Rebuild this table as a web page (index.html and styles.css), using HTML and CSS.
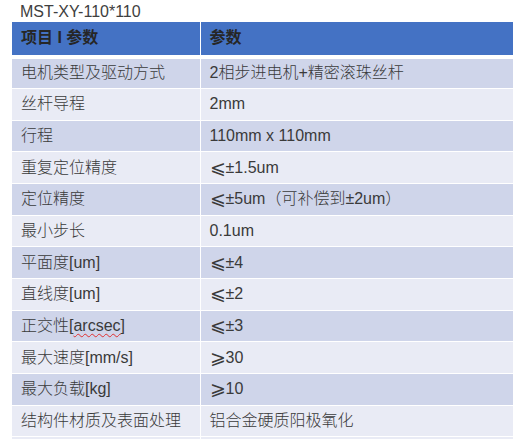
FILE: index.html
```html
<!DOCTYPE html>
<html lang="zh">
<head>
<meta charset="utf-8">
<title>MST-XY-110*110</title>
<link rel="stylesheet" href="styles.css">
</head>
<body>
<div class="title">MST-XY-110*110</div>
<table class="spec">
  <thead>
    <tr><th>项目 I 参数</th><th>参数</th></tr>
  </thead>
  <tbody>
    <tr class="odd"><td>电机类型及驱动方式</td><td>2相步进电机+精密滚珠丝杆</td></tr>
    <tr class="even"><td>丝杆导程</td><td>2mm</td></tr>
    <tr class="odd"><td>行程</td><td>110mm x 110mm</td></tr>
    <tr class="even"><td>重复定位精度</td><td><span class="sym">⩽</span>±1.5um</td></tr>
    <tr class="odd"><td>定位精度</td><td><span class="sym">⩽</span>±5um（可补偿到±2um）</td></tr>
    <tr class="even"><td>最小步长</td><td>0.1um</td></tr>
    <tr class="odd"><td>平面度[um]</td><td><span class="sym">⩽</span>±4</td></tr>
    <tr class="even"><td>直线度[um]</td><td><span class="sym">⩽</span>±2</td></tr>
    <tr class="odd"><td>正交性[<span class="spell">arcsec</span>]</td><td><span class="sym">⩽</span>±3</td></tr>
    <tr class="even"><td>最大速度[mm/s]</td><td><span class="sym">⩾</span>30</td></tr>
    <tr class="odd"><td>最大负载[kg]</td><td><span class="sym">⩾</span>10</td></tr>
    <tr class="even"><td>结构件材质及表面处理</td><td>铝合金硬质阳极氧化</td></tr>
    <tr class="even stub"><td></td><td></td></tr>
  </tbody>
</table>
</body>
</html>
```
FILE: styles.css
```css
html, body {
  margin: 0;
  padding: 0;
  background: #ffffff;
}
body {
  padding: 2px 0 0 12px;
  font-family: "Liberation Sans", "Noto Sans CJK SC", sans-serif;
  font-size: 16px;
  font-weight: 300;
  color: #3a3a3a;
  overflow: hidden;
  height: 440px;
  box-sizing: border-box;
}
.title {
  line-height: 20px;
  height: 20px;
  padding-left: 8px;
  color: #404040;
}
.spec {
  width: 501px;
  border-collapse: collapse;
  table-layout: fixed;
}
.spec th, .spec td {
  text-align: left;
  padding: 0 0 0 9px;
  line-height: 20px;
  white-space: nowrap;
  box-sizing: border-box;
  vertical-align: middle;
}
.spec th:first-child, .spec td:first-child {
  width: 188px;
}
.spec th + th, .spec td + td {
  border-left: 1.5px solid #ffffff;
}
.spec thead th {
  height: 34.7px;
  background: #4472c4;
  color: #262626;
  font-weight: bold;
  border-bottom: 4px solid #ffffff;
}
.spec tbody td {
  height: 31.7px;
  border-bottom: 1px solid #ffffff;
}
.spec tbody .stub td {
  height: 2.5px;
  line-height: 0;
  border-bottom: 0;
}
.odd td {
  background: #cfd5ea;
}
.even td {
  background: #e9ebf5;
}
.sym {
  font-family: "DejaVu Sans", sans-serif;
  font-size: 19px;
  line-height: 16px;
  display: inline-block;
  vertical-align: -1px;
}
.spell {
  text-decoration: underline wavy #e03030;
  text-decoration-thickness: 1px;
  text-underline-offset: 2px;
}
```
